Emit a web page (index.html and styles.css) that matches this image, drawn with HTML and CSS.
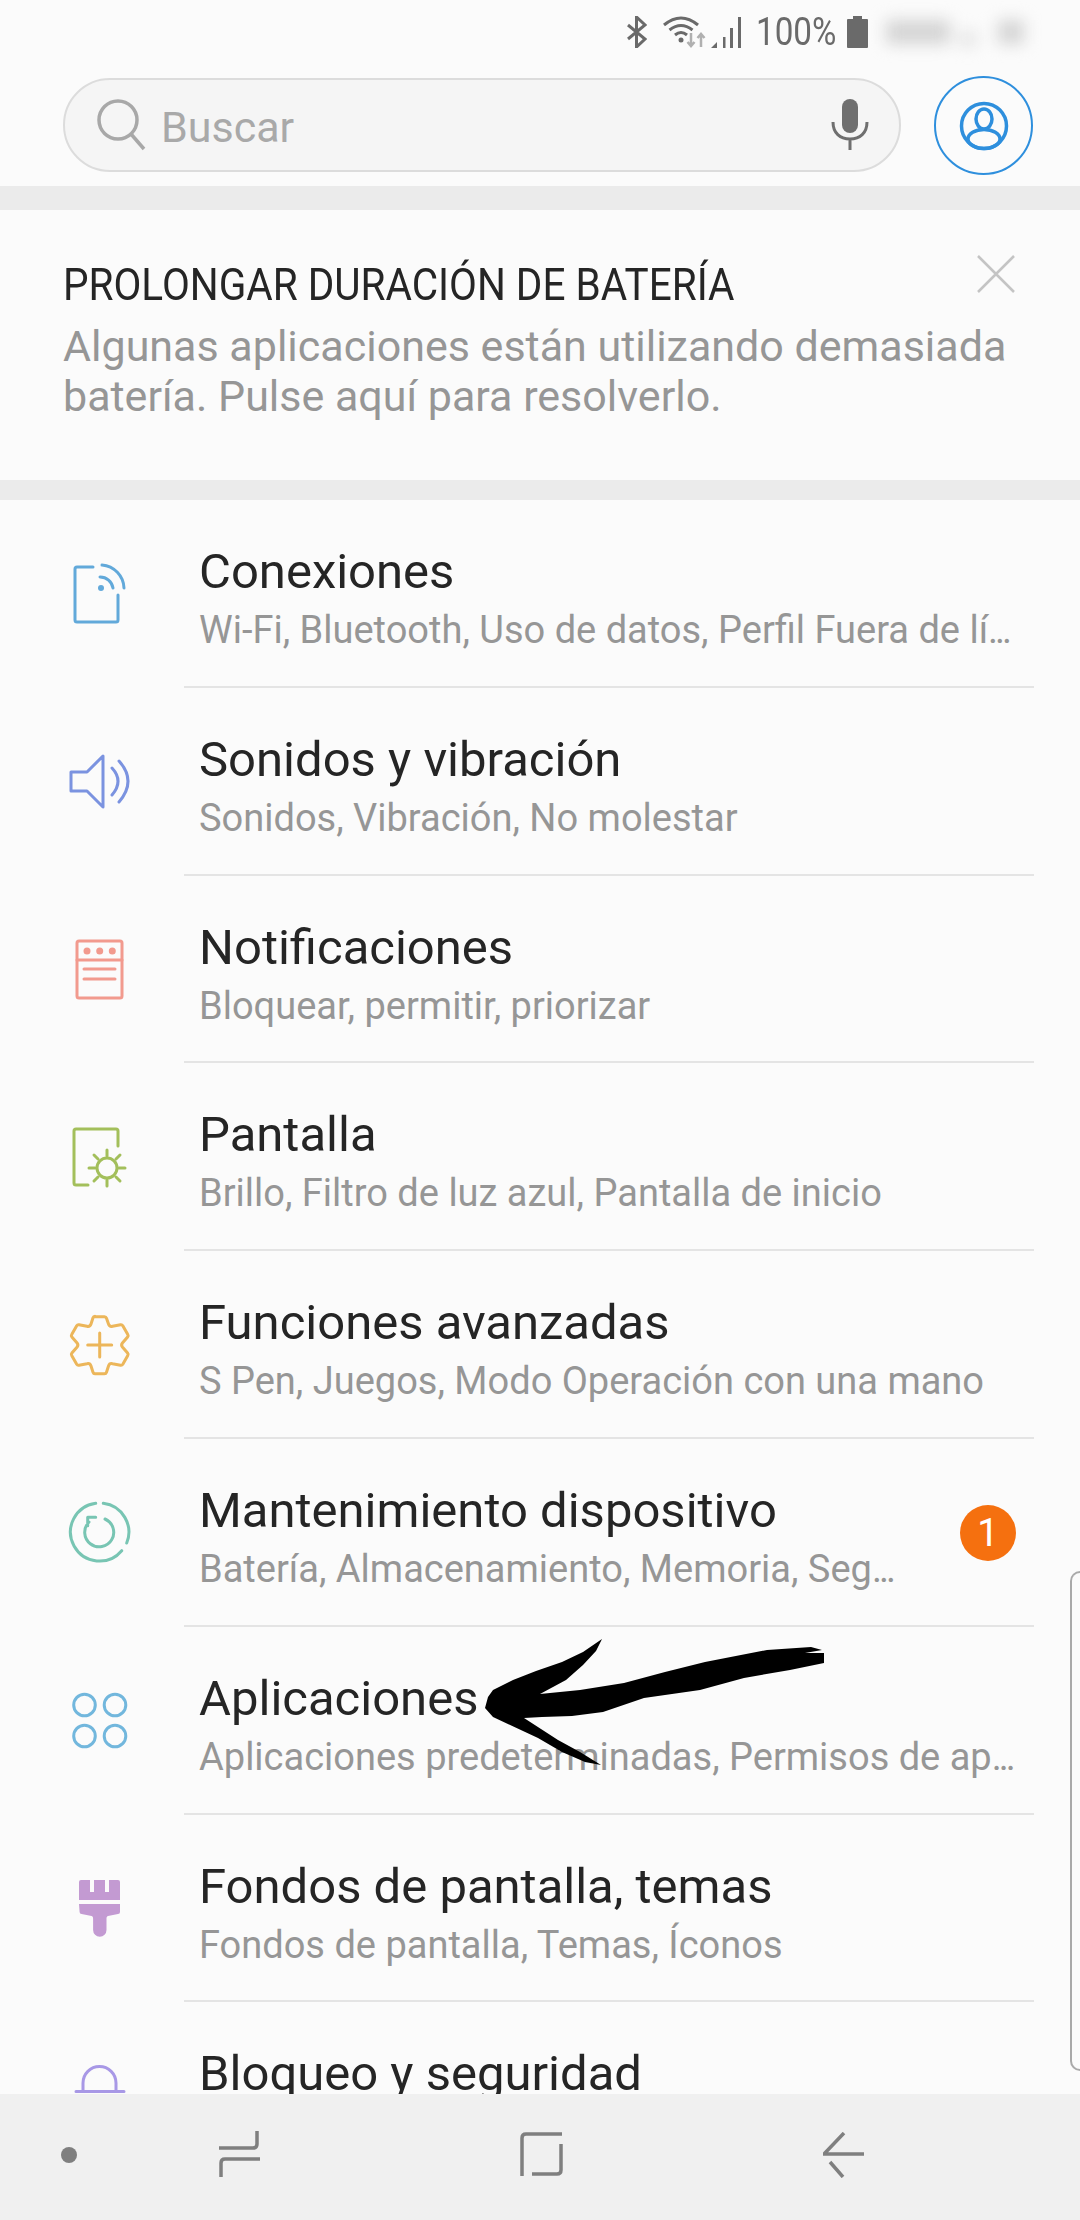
FILE: index.html
```html
<html>
  <head>
    <title>Ajustes</title>
    <link rel="stylesheet" href="styles.css">
  </head>
  <body>
    <div class="statusbar">
      <svg class="st-bt" width="21" height="32" viewBox="0 0 21 32"><path d="M2 9l17 14-8.500 8V1l8.500 8L2 23"/></svg>
      <svg class="st-wifi" width="48" height="32" viewBox="0 0 48 32">
        <path d="M1 9Q18-5 35 9M6.500 14Q18 5 29.500 14M12 19q6-5 12 0"/>
        <circle cx="18" cy="24" r="2.500"/>
        <path class="st-arrow" d="M28 17v13M24.500 26l3.500 4 3.500-4M38 31V18M34.500 22l3.500-4 3.500 4"/>
      </svg>
      <svg class="st-signal" width="32" height="32" viewBox="0 0 32 32">
        <path d="M0 32l6-6v6zM12 21h2.500v11H12zM19 12h3v20h-3zM27 1h3v31h-3z"/>
      </svg>
      <span class="st-pct">100%</span>
      <svg class="st-batt" width="21" height="32" viewBox="0 0 21 32"><path d="M6 0h9v3h5a1 1 0 0 1 1 1v27a1 1 0 0 1-1 1H1a1 1 0 0 1-1-1V4a1 1 0 0 1 1-1h5z"/></svg>
      <div class="st-blur"><i></i><i></i><i></i></div>
    </div>

    <div class="searchrow">
      <div class="searchbox">
        <svg class="search-glass" width="52" height="52" viewBox="0 0 52 52"><circle cx="22" cy="21" r="19"/><path d="M35 35l13 15"/></svg>
        <span class="search-hint">Buscar</span>
        <svg class="search-mic" width="38" height="52" viewBox="0 0 38 52">
          <rect class="mic-body" x="11" y="0" width="16" height="34" rx="8"/>
          <path d="M2 23c0 11 7 17 17 17s17-6 17-17M19 40v11"/>
        </svg>
      </div>
      <div class="avatar">
        <svg width="50" height="50" viewBox="0 0 50 50">
          <circle cx="25" cy="25" r="22.500"/>
          <ellipse cx="25" cy="18" rx="8" ry="10"/>
          <ellipse cx="25" cy="38" rx="16" ry="9.500"/>
        </svg>
      </div>
    </div>

    <div class="band"></div>

    <section class="notice">
      <div class="notice-text">
        <div class="notice-title">PROLONGAR DURACIÓN DE BATERÍA</div>
        <div class="notice-desc">Algunas aplicaciones están utilizando demasiada<br>batería. Pulse aquí para resolverlo.</div>
      </div>
      <svg class="notice-close" width="40" height="40" viewBox="0 0 40 40"><path d="M2 2l36 36M38 2L2 38"/></svg>
    </section>

    <div class="band band-low"></div>

    <main class="list">
      <div class="row">
        <svg class="row-icon ic-blue" viewBox="0 0 64 64">
          <path d="M25 5H9a2 2 0 0 0-2 2v51a2 2 0 0 0 2 2h39a2 2 0 0 0 2-2V33"/>
          <path d="M32 15a13 13 0 0 1 13 11M34 3a24 24 0 0 1 22 23"/>
          <circle class="fill" cx="33" cy="26" r="3"/>
        </svg>
        <div class="row-body">
          <div class="row-title">Conexiones</div>
          <div class="row-sub">Wi-Fi, Bluetooth, Uso de datos, Perfil Fuera de lí<span class="dots">...</span></div>
        </div>
      </div>
      <div class="row">
        <svg class="row-icon ic-indigo" viewBox="0 0 64 64">
          <path d="M3 22h16L35 6v51L19 41H3z"/>
          <path d="M44 18q12 13 0 27M51 11q18 20 0 41"/>
        </svg>
        <div class="row-body">
          <div class="row-title">Sonidos y vibración</div>
          <div class="row-sub">Sonidos, Vibración, No molestar</div>
        </div>
      </div>
      <div class="row">
        <svg class="row-icon ic-salmon" viewBox="0 0 64 64">
          <rect x="9" y="4" width="45" height="57" rx="2"/>
          <path d="M9 23h45M16 32h31M16 42h31"/>
          <circle class="fill" cx="19" cy="14" r="3.500"/>
          <circle class="fill" cx="31.700" cy="14" r="3.500"/>
          <circle class="fill" cx="44.300" cy="14" r="3.500"/>
        </svg>
        <div class="row-body">
          <div class="row-title">Notificaciones</div>
          <div class="row-sub">Bloquear, permitir, priorizar</div>
        </div>
      </div>
      <div class="row">
        <svg class="row-icon ic-green" viewBox="0 0 64 64">
          <path d="M20 60H8a2 2 0 0 1-2-2V6a2 2 0 0 1 2-2h40a2 2 0 0 1 2 2v15"/>
          <circle cx="39" cy="43" r="10"/>
          <path d="M39 25v6M39 55v6M21 43h6M51 43h6M26 30l4 4M48 52l4 4M52 30l-4 4M30 52l-4 4"/>
        </svg>
        <div class="row-body">
          <div class="row-title">Pantalla</div>
          <div class="row-sub">Brillo, Filtro de luz azul, Pantalla de inicio</div>
        </div>
      </div>
      <div class="row">
        <svg class="row-icon ic-amber" viewBox="0 0 64 64">
          <path d="M27 3.700H36.500q1.500 0 2 1.500L40.500 11q1 3 4 2.300l8-1.600q1.500-.3 2.300 1l5 8.800q.8 1.300-.2 2.500l-5.200 6q-1.600 2 0 4l5.200 6q1 1.200.2 2.500l-5 8.800q-.8 1.300-2.300 1l-8-1.600q-3-.7-4 2.300l-2 6.300q-.5 1.500-2 1.500H27q-1.500 0-2-1.500l-2-6.300q-1-3-4-2.300l-8 1.600q-1.500.3-2.300-1l-5-8.800q-.8-1.300.2-2.500l5.200-6q1.600-2 0-4l-5.200-6q-1-1.200-.2-2.500l5-8.800q.8-1.300 2.300-1l8 1.600q3 .7 4-2.300l2-6.300q.5-1.500 2-1.500z"/>
          <path d="M31.700 20v24M19.700 32h24"/>
        </svg>
        <div class="row-body">
          <div class="row-title">Funciones avanzadas</div>
          <div class="row-sub">S Pen, Juegos, Modo Operación con una mano</div>
        </div>
      </div>
      <div class="row">
        <svg class="row-icon ic-teal" viewBox="0 0 64 64">
          <path d="M35.300 2.300A29 29 0 0 1 58.700 42M53.700 49.700A29 29 0 1 1 27.700 2.300"/>
          <path d="M37 18a14.500 14.500 0 1 1-16 3M19.700 24.700v-8.400h8"/>
        </svg>
        <div class="row-body">
          <div class="row-title">Mantenimiento dispositivo</div>
          <div class="row-sub">Batería, Almacenamiento, Memoria, Seg<span class="dots">...</span></div>
        </div>
        <span class="badge">1</span>
      </div>
      <div class="row">
        <svg class="row-icon ic-sky" viewBox="0 0 64 64">
          <circle cx="16.500" cy="16" r="10.800"/>
          <circle cx="47" cy="16" r="10.800"/>
          <circle cx="16.500" cy="47" r="10.800"/>
          <circle cx="47" cy="47" r="10.800"/>
        </svg>
        <div class="row-body">
          <div class="row-title">Aplicaciones</div>
          <div class="row-sub">Aplicaciones predeterminadas, Permisos de ap<span class="dots">...</span></div>
        </div>
      </div>
      <div class="row">
        <svg class="row-icon ic-purple" viewBox="0 0 64 64">
          <path class="fill" d="M13 4h9v12h4V4h11v12h4V4h9a2 2 0 0 1 2 2v18H11V6a2 2 0 0 1 2-2zM11 28h41v8a2 2 0 0 1-2 2l-10 2c-1.500.5-1.500 2-1.500 3v11a6.700 6.700 0 0 1-13.400 0V43c0-1 0-2.500-1.500-3l-10-2a2 2 0 0 1-2-2z"/>
        </svg>
        <div class="row-body">
          <div class="row-title">Fondos de pantalla, temas</div>
          <div class="row-sub">Fondos de pantalla, Temas, Íconos</div>
        </div>
      </div>
      <div class="row">
        <svg class="row-icon ic-lilac" viewBox="0 0 64 64">
          <path d="M15 27V19a16.500 16.500 0 0 1 33 0v8M8 27.500h48"/>
        </svg>
        <div class="row-body">
          <div class="row-title">Bloqueo y seguridad</div>
        </div>
      </div>
    </main>

    <nav class="navbar">
      <span class="nav-dot"></span>
      <svg width="44" height="48" viewBox="0 0 44 48"><path d="M39 0v13q0 4-4 4H1M42 28H7q-4 0-4 4v14"/></svg>
      <svg width="44" height="46" viewBox="0 0 44 46"><path d="M42 2H6q-4 0-4 4v38M41 12v26q0 4-4 4H12"/></svg>
      <svg width="44" height="46" viewBox="0 0 44 46"><path d="M21 1L1 22h40M7 30l13 15"/></svg>
    </nav>

    <!-- edge panel handle -->
    <div class="edge-handle"></div>

    <!-- hand drawn arrow on top of the screenshot -->
    <svg class="scribble" width="350" height="135" viewBox="0 0 350 135">
      <path d="M122 4L116 16 103 30 86 45 60 59 100 55 144 48 185 37 225 27 287 15 331 12 342 15 325 18 344 18 344 28 310 35 264 43 220 55 164 63 123 77 92 81 62 82 44 83 78 105 100 117 121 130 105 127 82 117 58 103 13 82 5 73 8 62 13 55 33 45 56 36 82 27 103 17z"/>
    </svg>
  </body>
</html>
```

FILE: styles.css
```css
:root {
  --page: #fbfbfb;
  --band: #ebebeb;
  --line: #e4e4e4;
  --ink: #252525;
  --muted: #969696;
}

body {
  margin: 0;
  width: 1080px;
  height: 2220px;
  overflow: hidden;
  position: relative;
  display: flex;
  flex-direction: column;
  background-color: var(--page);
  color: var(--ink);
  font-family: Roboto, "Liberation Sans", sans-serif;
}
svg {
  display: block;
  flex-shrink: 0;
}

/* status bar */
.statusbar {
  height: 76px;
  flex-shrink: 0;
  display: flex;
  align-items: flex-start;
  padding: 16px 0 0 626px;
  box-sizing: border-box;
  color: #6a6a6a;
  position: relative;
}
.statusbar svg {
  fill: #6a6a6a;
}
.st-bt,
.st-wifi {
  fill: none !important;
  stroke: #6a6a6a;
  stroke-width: 3;
}
.st-wifi {
  margin-left: 16px;
}
.st-wifi circle {
  fill: #6a6a6a;
  stroke: none;
}
.st-arrow {
  stroke: #b0b0b0;
  stroke-width: 2.5;
}
.st-pct {
  margin-left: 13px;
  width: 79px;
  font-size: 38px;
  line-height: 32px;
  white-space: nowrap;
  transform: scaleX(0.875); /* the status font is a narrow cut */
  transform-origin: left;
}
.st-batt {
  margin-left: 12px;
}
.st-blur {
  position: absolute;
  left: 878px;
  top: 0;
  width: 160px;
  height: 60px;
  display: flex;
  align-items: center;
  gap: 10px;
  padding: 4px 0 0 8px;
  box-sizing: border-box;
  filter: blur(8px);
}
.st-blur i {
  display: block;
  width: 64px;
  height: 24px;
  background-color: #d4d4d4;
}
.st-blur i:nth-child(2) {
  width: 16px;
  height: 14px;
  margin-top: 14px;
  background-color: #e0e0e0;
}
.st-blur i:nth-child(3) {
  width: 26px;
  margin-left: 12px;
}

/* search */
.searchrow {
  height: 110px;
  flex-shrink: 0;
  display: flex;
  align-items: flex-start;
  padding: 0 47px 0 63px;
  gap: 33px;
}
.searchbox {
  flex: 1;
  height: 94px;
  box-sizing: border-box;
  margin-top: 2px;
  border: 2px solid #dcdcdc;
  border-radius: 47px;
  background-color: #f5f5f5;
  display: flex;
  align-items: center;
  padding: 0 30px 0 31px;
}
.search-glass {
  fill: none;
  stroke: #a8a8a8;
  stroke-width: 3.5;
}
.search-hint {
  flex: 1;
  margin-left: 13px;
  padding-top: 3px;
  font-size: 43px;
  color: #a9a9a9;
}
.search-mic {
  fill: none;
  stroke: #6f6f6f;
  stroke-width: 3;
}
.mic-body {
  fill: #6f6f6f;
  stroke: none;
}
.avatar {
  width: 99px;
  height: 99px;
  box-sizing: border-box;
  border: 2px solid #2e8fdd;
  border-radius: 50%;
  display: flex;
  align-items: center;
  justify-content: center;
}
.avatar svg {
  fill: none;
  stroke: #2e8fdd;
  stroke-width: 3.5;
}

.band {
  height: 24px;
  flex-shrink: 0;
  background-color: var(--band);
}
.band-low {
  height: 20px;
}

/* battery notice */
.notice {
  height: 270px;
  flex-shrink: 0;
  box-sizing: border-box;
  padding: 50px 64px 0 63px;
  display: flex;
  justify-content: space-between;
}
.notice-text {
  width: 890px;
}
.notice-title {
  font-size: 45px;
  line-height: 50px;
  white-space: nowrap;
  transform: scaleX(0.9);
  transform-origin: left;
}
.notice-desc {
  margin-top: 11px;
  font-size: 43px;
  line-height: 50px;
  white-space: nowrap;
  color: var(--muted);
}
.notice-close {
  margin-top: -6px;
  fill: none;
  stroke: #c4c4c4;
  stroke-width: 2.5;
}

/* settings list */
.list {
  flex: 1;
  min-height: 0;
  overflow: hidden;
}
.row {
  height: 187.800px;
  display: flex;
  align-items: center;
  padding: 0 46px 0 68px;
  position: relative;
}
.row-icon {
  width: 64px;
  height: 64px;
  margin-right: 52px;
  fill: none;
  stroke: currentColor;
  stroke-width: 3;
  stroke-linecap: round;
  stroke-linejoin: round;
  overflow: visible;
}
.row-icon .fill {
  fill: currentColor;
  stroke: none;
}
.ic-blue { color: #62a9da; }
.ic-indigo { color: #7b93e0; }
.ic-salmon { color: #f29a8e; }
.ic-green { color: #a3bf5b; }
.ic-amber { color: #ecb65a; }
.ic-teal { color: #78c5b3; }
.ic-sky { color: #72b7dd; }
.ic-purple { color: #c39ad2; }
.ic-lilac { color: #a898e6; }

.row-body {
  flex: 1;
  align-self: stretch;
  padding: 44px 0 0 15px;
  border-bottom: 2px solid var(--line);
  white-space: nowrap;
  overflow: hidden;
}
.row:nth-last-child(1) .row-body {
  border-bottom: 0;
}
.row-title {
  font-size: 49px;
  line-height: 56px;
}
.row-sub {
  margin-top: 5px;
  font-size: 38px;
  line-height: 50px;
  color: var(--muted);
}
.dots {
  letter-spacing: -3px;
}
.badge {
  position: absolute;
  right: 64px;
  top: 66px;
  width: 56px;
  height: 56px;
  border-radius: 50%;
  background-color: #f5700f;
  color: #fff;
  font-size: 38px;
  line-height: 56px;
  text-align: center;
}

/* bottom navigation */
.navbar {
  height: 126px;
  flex-shrink: 0;
  box-sizing: border-box;
  padding: 0 0 4px 61px;
  background-color: #f0f0f0;
  display: grid;
  grid-template-columns: 157px 302px 303px 44px;
  align-items: center;
}
.navbar svg {
  fill: none;
  stroke: #7f7f7f;
  stroke-width: 3.5;
}
.nav-dot {
  width: 16px;
  height: 16px;
  border-radius: 50%;
  background-color: #7f7f7f;
}

.edge-handle {
  position: absolute;
  right: 0;
  top: 1571px;
  width: 8px;
  height: 496px;
  border: 2px solid #a9a9a9;
  border-right: 0;
  border-radius: 10px 0 0 10px;
}
.scribble {
  position: absolute;
  left: 480px;
  top: 1635px;
  fill: #000;
}
```
